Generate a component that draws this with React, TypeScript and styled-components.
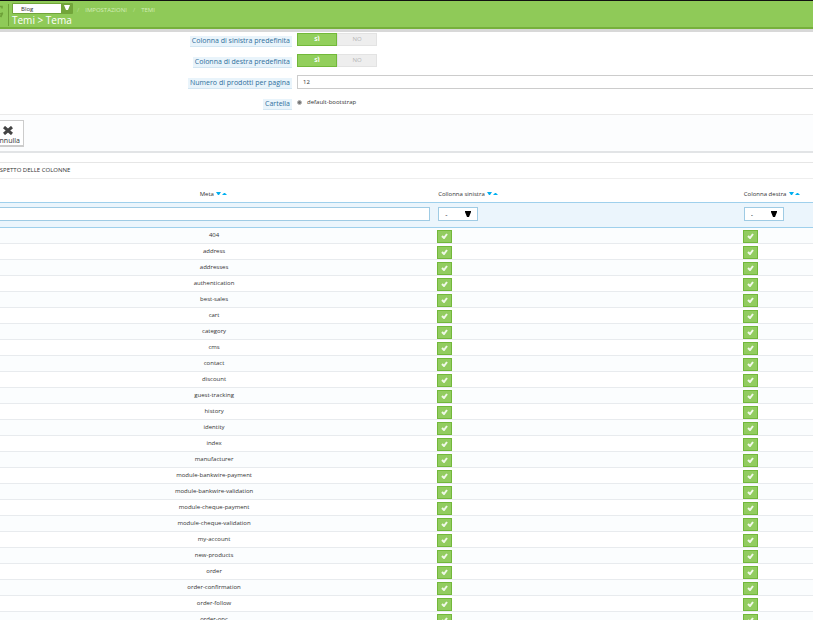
import React, { useState } from 'react';
import styled, { createGlobalStyle } from 'styled-components';

const Global = createGlobalStyle`
  * { box-sizing: border-box; }
  body { margin: 0; background: #fff; overflow: hidden; }
  body, button, input, select { font-family: "Open Sans", sans-serif; font-size: 7px; color: #333; }
`;

const Page = styled.div`
  height: 100vh;
  overflow: hidden;
`;

const Header = styled.header`
  display: flex;
  gap: 3px;
  height: 29px;
  background: #8fca58;
  border-top: 1px solid #111;
  border-bottom: 2px solid #76b03c;
`;

const Refresh = styled.button`
  display: flex;
  justify-content: flex-end;
  width: 9px;
  height: 22px;
  margin-top: 3px;
  padding: 0 3px 0 0;
  border: 0;
  border-right: 1px solid #6da038;
  background: none;

  svg { flex: none; }
`;

const HeaderMain = styled.div`
  display: flex;
  flex-direction: column;
  padding-top: 2px;
`;

const HeaderTop = styled.div`
  display: flex;
  align-items: center;
  height: 11px;
`;

const Picker = styled.div`
  position: relative;
  display: flex;
  width: 61px;
  height: 11px;
`;

const PickerSelect = styled.select`
  appearance: none;
  width: 100%;
  height: 11px;
  padding: 1px 0 0 8px;
  border: 1px solid #72a53a;
  border-right-width: 12px;
  border-radius: 1px;
  background: #fff;
  font-size: 6px;
  line-height: 9px;
`;

const PickerArrow = styled.svg`
  position: absolute;
  right: 3px;
  top: 2px;
  pointer-events: none;
`;

const Crumbs = styled.nav`
  display: flex;
  gap: 6px;
  padding: 2px 0 0 4px;
  font-size: 6px;
  line-height: 8px;
  color: #b9e092;

  a { color: #d3edb9; text-decoration: none; }
`;

const Title = styled.h1`
  margin: 0;
  font-size: 10px;
  font-weight: 400;
  line-height: 13px;
  color: #fff;
`;

const Form = styled.form`
  border-top: 3px solid #d8d8d8;
`;

const Fields = styled.div`
  display: flex;
  flex-direction: column;
  padding-bottom: 1px;
`;

const Field = styled.div`
  display: grid;
  grid-template-columns: 292px 1fr;
  align-items: center;
  column-gap: 5px;
  height: 21px;

  &:first-child { height: 18px; padding-bottom: 3px; }
`;

const Tag = styled.label`
  justify-self: end;
  margin-top: 3px;
  padding: 0 2px;
  background: #e9f4fb;
  border-bottom: 1px solid #d3e6f2;
  font-size: 7px;
  line-height: 10px;
  color: #2f6f9c;
  white-space: nowrap;
`;

const Switch = styled.div`
  display: flex;
  width: 80px;
  height: 13px;
`;

const SwitchOption = styled.label`
  flex: 1;
  border: 1px solid #e3e3e3;
  background: #eee;
  font-size: 6px;
  line-height: 11px;
  text-align: center;
  color: #b5b5b5;

  input { position: absolute; opacity: 0; pointer-events: none; }

  &:has(input:checked) {
    border-color: #72b83a;
    background: #92cf5c;
    color: #fff;
    font-weight: 700;
  }
`;

const NumberBox = styled.input`
  width: calc(100% + 2px);
  height: 14px;
  padding: 0 5px;
  border: 1px solid #ccc;
  background: #fff;
  font-size: 6px;
`;

const Choice = styled.label`
  display: flex;
  align-items: center;
  gap: 5px;
  font-size: 6px;
  line-height: 11px;
`;

const Radio = styled.input`
  appearance: none;
  width: 5px;
  height: 5px;
  margin: 0;
  border: 1px solid #b5b5b5;
  border-radius: 50%;
  background: #777;
`;

const Footer = styled.div`
  display: flex;
  height: 39px;
  padding-top: 5px;
  background: #fcfdfe;
  border-top: 1px solid #eaeaea;
  border-bottom: 2px solid #e2e4e6;
`;

const Cancel = styled.button`
  display: flex;
  flex-direction: column;
  align-items: center;
  gap: 1px;
  width: 33px;
  height: 27px;
  margin-left: -9px;
  padding: 5px 0 0;
  border: 1px solid #ccc;
  border-bottom-width: 2px;
  background: #fff;
  line-height: 9px;
`;

const Panel = styled.section`
  margin-top: 9px;
  border-top: 1px solid #e6e6e6;
`;

const PanelTitle = styled.h2`
  margin: 0 0 0 -4px;
  border-bottom: 1px solid #eee;
  font-size: 6px;
  font-weight: 400;
  line-height: 15px;
  color: #333;
`;

const Table = styled.table`
  width: 100%;
  table-layout: fixed;
  border-collapse: separate;
  border-spacing: 0;
`;

const Head = styled.th<{ $width: string; $center?: boolean }>`
  width: ${p => p.$width};
  height: 23px;
  padding: ${p => (p.$center ? '6px 6px 0 0' : '6px 0 0 4px')};
  text-align: ${p => (p.$center ? 'center' : 'left')};
  font-size: 6px;
  font-weight: 400;
  white-space: nowrap;
`;

const SortButton = styled.button`
  width: 6px;
  height: 5px;
  padding: 0;
  border: 0;
  background: none;
  vertical-align: middle;

  &:first-of-type { margin-left: 1px; }

  svg { display: block; }
`;

const FilterCell = styled.td`
  height: 26px;
  padding: 0 4px 2px;
  background: #ebf5fc;
  border-top: 1px solid #9fd0ec;
  border-bottom: 1px solid #9fd0ec;
  vertical-align: middle;

  &:first-child { padding-left: 0; }
`;

const FilterInput = styled.input`
  display: block;
  width: 100%;
  height: 14px;
  border: 1px solid #9fcbe4;
  border-left: 0;
  background: #fff;
`;

const FilterSelectBox = styled.div`
  position: relative;
  width: 40px;
`;

const FilterSelect = styled.select`
  appearance: none;
  display: block;
  width: 100%;
  height: 14px;
  padding: 0 14px 0 6px;
  border: 1px solid #9fcbe4;
  border-radius: 0;
  background: #fff;
`;

const FilterArrow = styled.svg`
  position: absolute;
  right: 6px;
  top: 4px;
  pointer-events: none;
`;

const Row = styled.tr`
  &:nth-child(odd) { background: #fbfdfe; }
`;

const Cell = styled.td<{ $center?: boolean }>`
  height: 16px;
  padding: ${p => (p.$center ? '0 6px 0 0' : '1px 0 0 3px')};
  border-bottom: 1px solid #e8ebee;
  text-align: ${p => (p.$center ? 'center' : 'left')};
  font-size: 6px;
  line-height: 13px;
`;

const Check = styled.button`
  display: flex;
  align-items: center;
  justify-content: center;
  width: 15px;
  height: 13px;
  padding: 0;
  border: 1px solid #72b83a;
  background: #92cc60;
`;

const metas = [
  '404', 'address', 'addresses', 'authentication', 'best-sales', 'cart', 'category', 'cms',
  'contact', 'discount', 'guest-tracking', 'history', 'identity', 'index', 'manufacturer',
  'module-bankwire-payment', 'module-bankwire-validation', 'module-cheque-payment',
  'module-cheque-validation', 'my-account', 'new-products', 'order', 'order-confirmation',
  'order-follow', 'order-opc',
];

function Toggle({ name, label }: { name: string; label: string }) {
  const [on, setOn] = useState(true);
  return (
    <Field>
      <Tag htmlFor={`${name}-on`}>{label}</Tag>
      <Switch>
        <SwitchOption>
          <input id={`${name}-on`} type="radio" name={name} checked={on} onChange={() => setOn(true)} />SÌ
        </SwitchOption>
        <SwitchOption>
          <input type="radio" name={name} checked={!on} onChange={() => setOn(false)} />NO
        </SwitchOption>
      </Switch>
    </Field>
  );
}

function Sort() {
  return (
    <>
      {' '}
      <SortButton type="button" aria-label="Ordine decrescente">
        <svg width="5" height="5" viewBox="0 0 5 5"><path d="M0 1h5L3 4H2z" fill="#00aff0" /></svg>
      </SortButton>
      <SortButton type="button" aria-label="Ordine crescente">
        <svg width="5" height="5" viewBox="0 0 5 5"><path d="M0 4h5L3 2H2z" fill="#00aff0" /></svg>
      </SortButton>
    </>
  );
}

function Filter({ label }: { label: string }) {
  return (
    <FilterSelectBox>
      <FilterSelect aria-label={label}><option>-</option></FilterSelect>
      <FilterArrow width="8" height="6" viewBox="0 0 8 6"><path d="M1 0h6v1L5 6H3L1 1z" fill="#000" /></FilterArrow>
    </FilterSelectBox>
  );
}

function Enabled({ label }: { label: string }) {
  return (
    <Check type="button" aria-label={label}>
      <svg width="7" height="6" viewBox="0 0 7 6"><path d="M1 3l2 2 3-4" fill="none" stroke="#f0f8e8" strokeWidth="2" /></svg>
    </Check>
  );
}

export default function App() {
  return (
    <Page>
      <Global />
      <Header>
        <Refresh aria-label="Aggiorna">
          <svg width="8" height="16" viewBox="0 0 8 16">
            <path d="M2 2.500h3v2M1 11l3 1.500 1.500-3M3 10l3-1" fill="none" stroke="#6da038" strokeWidth="1.500" />
          </svg>
        </Refresh>
        <HeaderMain>
          <HeaderTop>
            <Picker>
              <PickerSelect aria-label="Negozio"><option>Blog</option></PickerSelect>
              <PickerArrow width="6" height="5" viewBox="0 0 6 5"><path d="M0 0h6L4 5H2z" fill="#fff" /></PickerArrow>
            </Picker>
            <Crumbs>
              <span>/</span><a href="#impostazioni">IMPOSTAZIONI</a>
              <span>/</span><a href="#temi">TEMI</a>
            </Crumbs>
          </HeaderTop>
          <Title>Temi &gt; Tema</Title>
        </HeaderMain>
      </Header>
      <Form onSubmit={e => e.preventDefault()}>
        <Fields>
          <Toggle name="left" label="Colonna di sinistra predefinita" />
          <Toggle name="right" label="Colonna di destra predefinita" />
          <Field>
            <Tag htmlFor="per-page">Numero di prodotti per pagina</Tag>
            <NumberBox id="per-page" defaultValue="12" />
          </Field>
          <Field>
            <Tag htmlFor="folder">Cartella</Tag>
            <Choice><Radio id="folder" type="radio" name="folder" defaultChecked />default-bootstrap</Choice>
          </Field>
        </Fields>
        <Footer>
          <Cancel type="button">
            <svg width="10" height="9" viewBox="0 0 10 9"><path d="M1 1l8 7M9 1L1 8" stroke="#444" strokeWidth="3" /></svg>
            Annulla
          </Cancel>
        </Footer>
      </Form>
      <Panel>
        <PanelTitle>ASPETTO DELLE COLONNE</PanelTitle>
        <Table>
          <thead>
            <tr>
              <Head $width="53.400%" $center>Meta<Sort /></Head>
              <Head $width="37.600%">Collonna sinistra<Sort /></Head>
              <Head $width="9%">Colonna destra<Sort /></Head>
            </tr>
            <tr>
              <FilterCell><FilterInput aria-label="Meta" /></FilterCell>
              <FilterCell><Filter label="Collonna sinistra" /></FilterCell>
              <FilterCell><Filter label="Colonna destra" /></FilterCell>
            </tr>
          </thead>
          <tbody>
            {metas.map(meta => (
              <Row key={meta}>
                <Cell $center>{meta}</Cell>
                <Cell><Enabled label={`${meta}: colonna sinistra`} /></Cell>
                <Cell><Enabled label={`${meta}: colonna destra`} /></Cell>
              </Row>
            ))}
          </tbody>
        </Table>
      </Panel>
    </Page>
  );
}
